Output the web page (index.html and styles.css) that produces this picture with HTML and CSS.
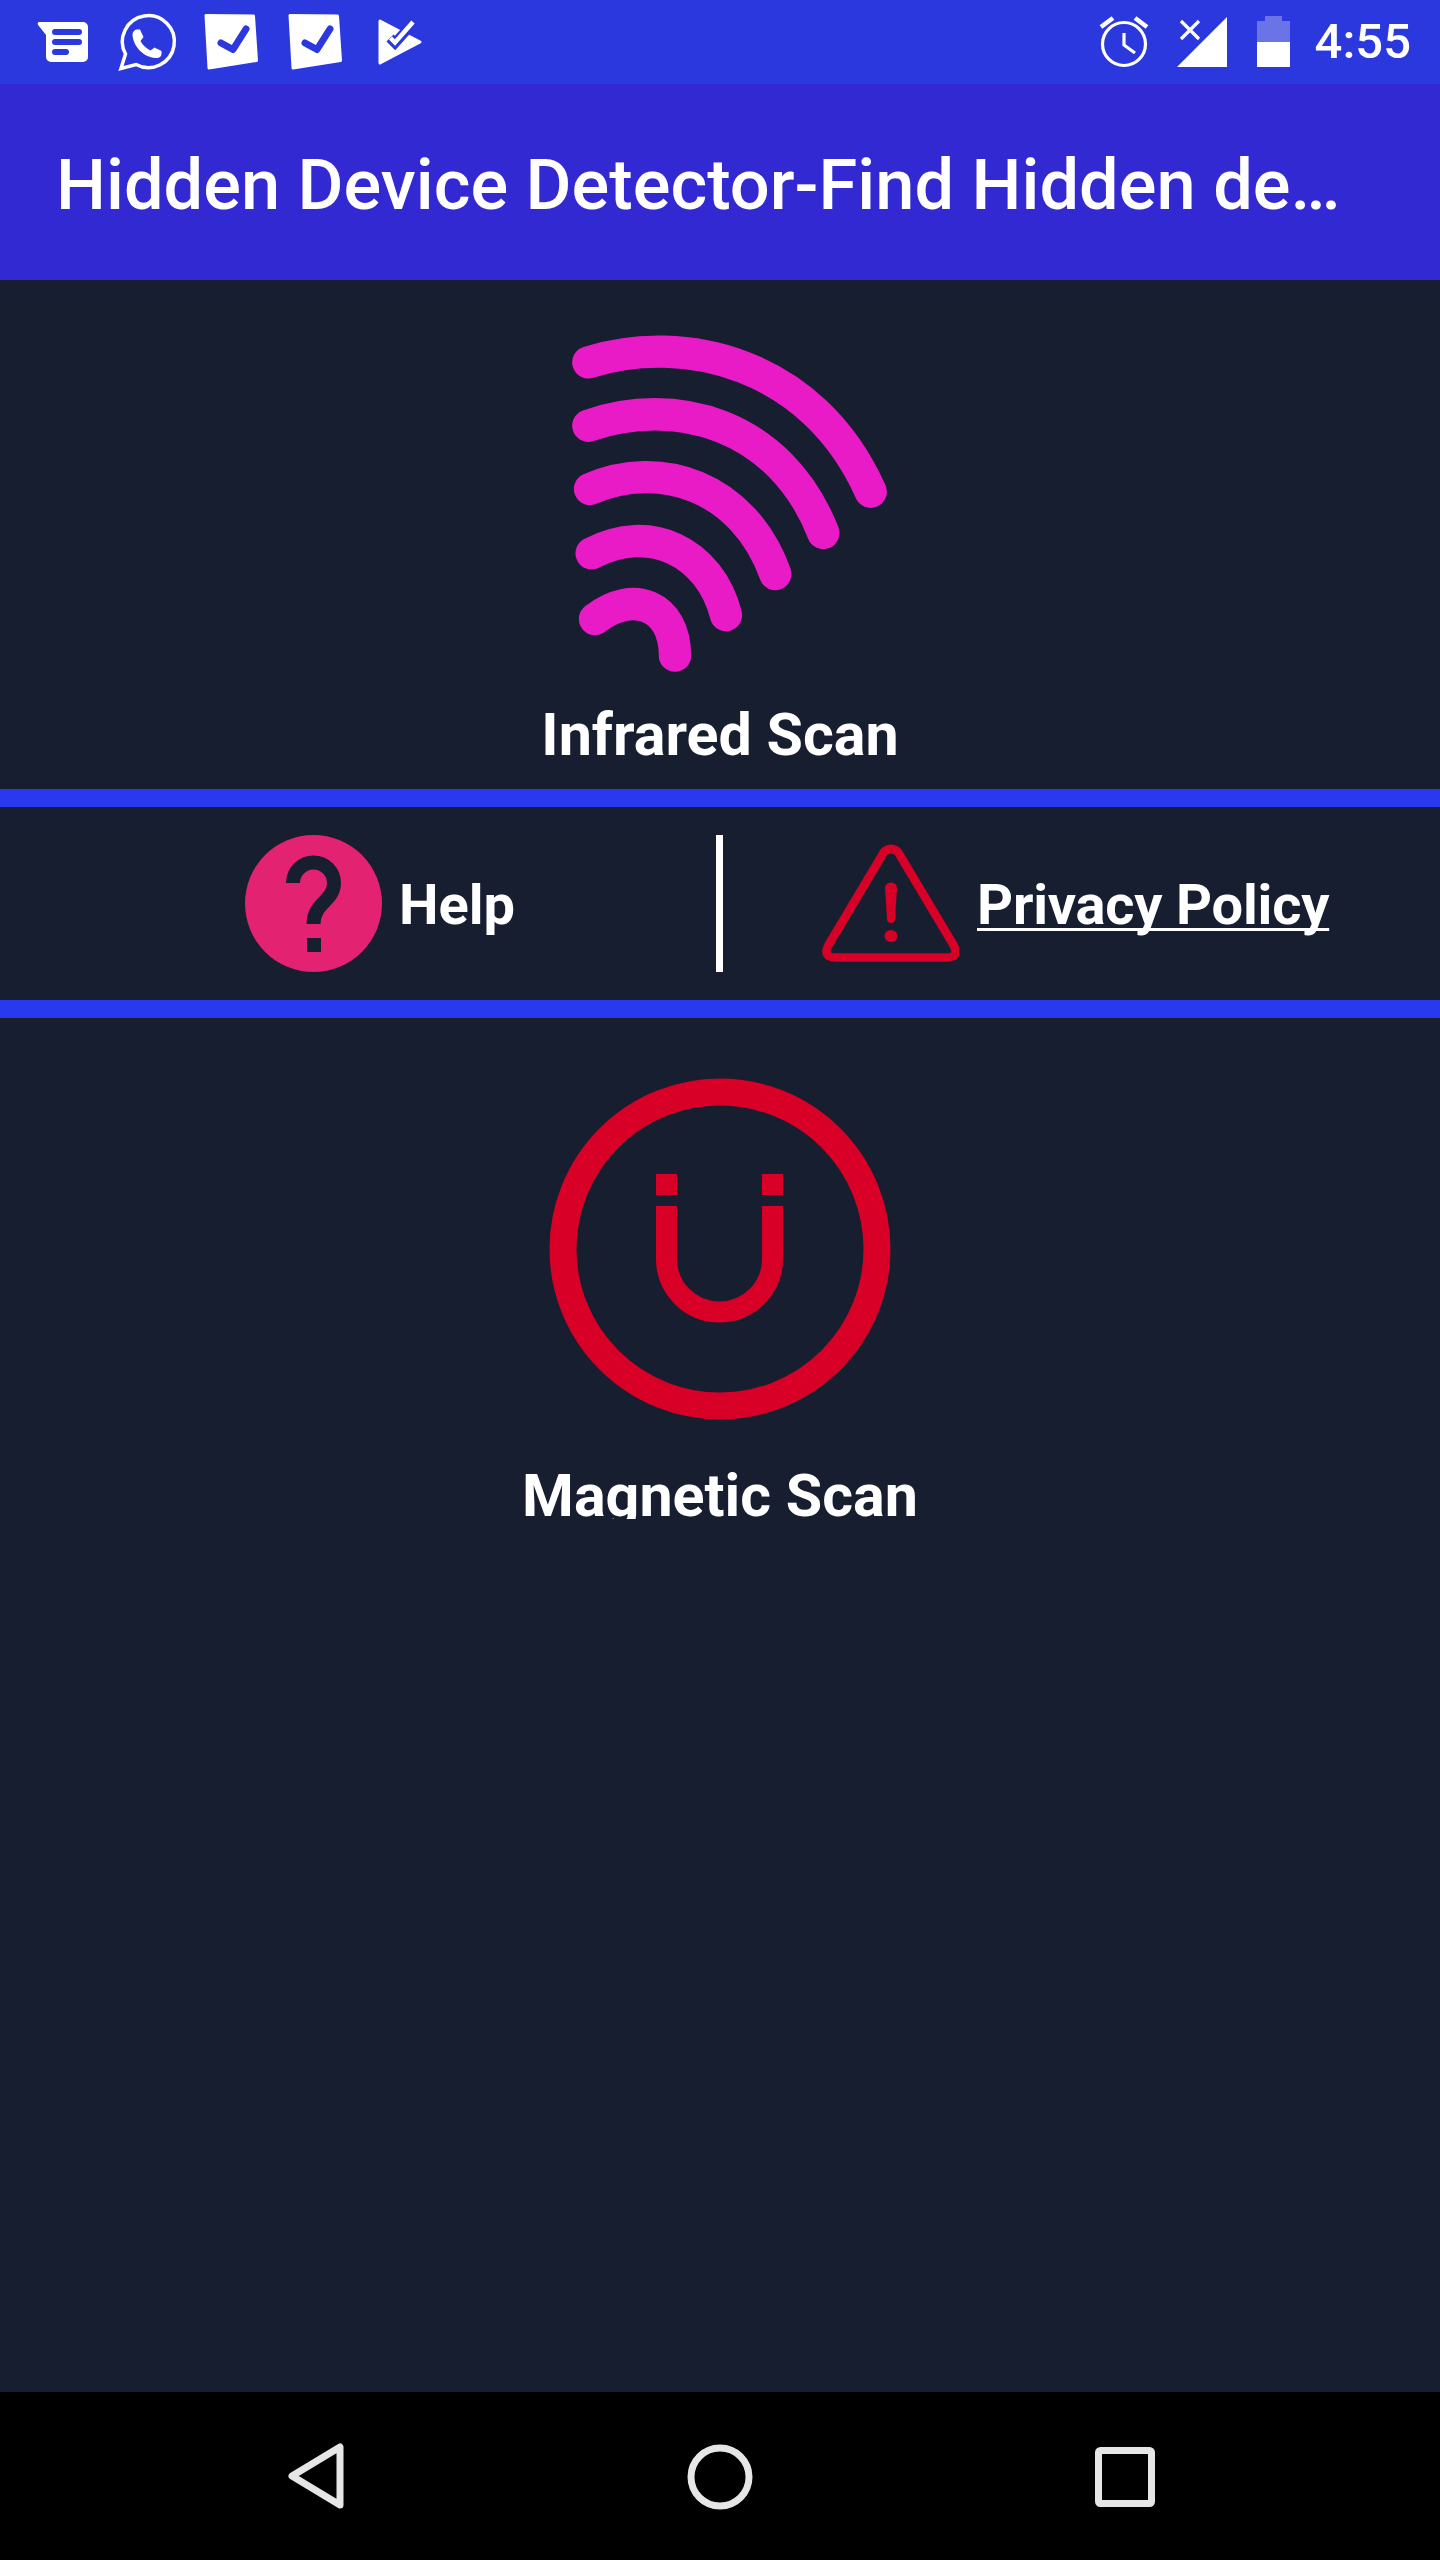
FILE: index.html
```html
<!DOCTYPE html>
<html lang="en">
<head>
<meta charset="utf-8">
<title>Hidden Device Detector</title>
<link rel="stylesheet" href="styles.css">
</head>
<body>
<div class="phone">
  <header class="status">
    <svg class="note" viewBox="21 0 84 84"><path class="w" d="M39 22H83a5 5 0 0 1 5 5V57a5 5 0 0 1-5 5H51a5 5 0 0 1-5-5V35L38.500 25.500A2 2 0 0 1 39 22Z"/><path class="b" d="M55 29H79a2 2 0 0 1 0 6H55a2 2 0 0 1 0-6ZM55 39H79a2 2 0 0 1 0 6H55a2 2 0 0 1 0-6ZM55 49H66a2 2 0 0 1 0 6H55a2 2 0 0 1 0-6Z"/></svg>
    <svg class="note" viewBox="105 0 84 84"><path class="ol" d="M121 68.500L125.500 54A26 26 0 1 1 136 64.500Z"/><path class="w" d="M137 29.500h3l3.500 7.500-3 4c2 4 6 7.500 10 9.500l4-3 7 3.500v3c0 3-3 4.500-6 4-12-1-22-11-23-23 0-3 2-5.500 4.500-5.500Z"/></svg>
    <svg class="note" viewBox="189 0 84 84"><path class="w rd" d="M206 15.500L253.500 16L256.500 60.500L209 68Z"/><path class="ck" d="M221 43L233 49.500L246 29"/></svg>
    <svg class="note" viewBox="273 0 84 84"><path class="w rd" d="M290 15.500L337.500 16L340.500 60.500L293 68Z"/><path class="ck" d="M305 43L317 49.500L330 29"/></svg>
    <svg class="note" viewBox="357 0 84 84"><path class="w rd" d="M380 21L420 42L380 63Z"/><path class="cb" d="M390 38L395 43L413 23"/><path class="cw" d="M390.500 38L395 42.500L413 22"/></svg>
    <div class="sys">
      <svg class="alarm" viewBox="0 0 80 84"><circle class="ln" cx="40" cy="44" r="21.500"/><path class="ln lt" d="M17 27L29 18M51 18L63 27"/><path class="ln" d="M40 33V45L51 53"/></svg>
      <svg class="signal" viewBox="0 0 76 84"><path class="w" d="M13 67H63V17Z"/><path class="ln" d="M17 21L35 39M35 21L17 39"/></svg>
      <svg class="battery" viewBox="0 0 67 84"><path class="w dim" d="M25 16H42V21H50V42H17V21H25Z"/><rect class="w" x="17" y="42" width="33" height="25"/></svg>
      <span class="clock">4:55</span>
    </div>
  </header>
  <div class="appbar"><h1 class="title">Hidden Device Detector-Find Hidden de…</h1></div>
  <main class="content">
    <section class="scan scan-ir">
      <svg class="wifi" viewBox="0 0 1140 1140"><path d="M145 160C430 70 820 160 992 548"/><path d="M145 350C400 260 720 340 850 672"/><path d="M150 540C360 450 610 530 706 795"/><path d="M155 733C330 640 510 730 558 918"/><path d="M165 930C280 840 405 890 405 1040"/></svg>
      <div class="label">Infrared Scan</div>
    </section>
    <nav class="links">
      <div class="link link-help">
        <svg class="link-icon" viewBox="0 0 137 137"><circle class="pink" cx="68.500" cy="68.500" r="68.500"/><path class="q" d="M48 48A20.500 20.500 0 0 1 89 48C89 66 68.500 68 68.500 89"/><rect class="qd" x="62" y="103" width="14" height="14"/></svg>
        <span class="link-text">Help</span>
      </div>
      <div class="divider"></div>
      <div class="link link-privacy">
        <svg class="link-icon" viewBox="0 0 137 137"><path class="tri" d="M62 17Q69 11 76 17L131.500 110Q138 122.500 124 122.500H14Q0 122.500 6.500 110Z"/><path class="red" d="M63 53a6 5.500 0 0 1 12 0L73 84a4 4 0 0 1-8 0Z"/><ellipse class="red" cx="69" cy="101" rx="6.500" ry="6"/></svg>
        <a class="link-text under" href="#">Privacy Policy</a>
      </div>
    </nav>
    <section class="scan scan-mag">
      <svg class="magnet" viewBox="0 0 342 342"><circle class="ring" cx="171" cy="171" r="157"/><rect class="red" x="107" y="96" width="21" height="21"/><rect class="red" x="213" y="96" width="21" height="21"/><path class="horse" d="M117.500 128V181A53 53 0 0 0 223.500 181V128"/></svg>
      <div class="label label-clip">Magnetic Scan</div>
    </section>
  </main>
  <footer class="navbar">
    <svg class="nav-back" viewBox="0 0 56 66"><path d="M52 4V62L4 33Z"/></svg>
    <svg class="nav-home" viewBox="0 0 66 66"><circle cx="33" cy="33" r="29"/></svg>
    <svg class="nav-recent" viewBox="0 0 60 60"><rect x="3.500" y="3.500" width="53" height="53" rx="2"/></svg>
  </footer>
</div>
</body>
</html>
```

FILE: styles.css
```css
* { box-sizing: border-box; }
html, body { margin: 0; padding: 0; background: #171e2f; }
.phone {
  width: 1440px;
  height: 2560px;
  display: flex;
  flex-direction: column;
  font-family: Roboto, "Liberation Sans", sans-serif;
  color: #fff;
  overflow: hidden;
}
.status {
  height: 84px;
  flex: none;
  display: flex;
  padding-left: 21px;
  background: #2b38dd;
}
.status svg { display: block; height: 84px; flex: none; }
.note { width: 84px; }
.w { fill: #fff; }
.b { fill: #2b38dd; }
.rd { stroke: #fff; stroke-width: 3; stroke-linejoin: round; }
.ol { fill: none; stroke: #fff; stroke-width: 3.500; stroke-linejoin: miter; }
.ck { fill: none; stroke: #2b38dd; stroke-width: 7; stroke-linecap: round; stroke-linejoin: round; }
.cb { fill: none; stroke: #2b38dd; stroke-width: 10; }
.cw { fill: none; stroke: #fff; stroke-width: 4.500; }
.sys { margin-left: auto; display: flex; align-items: center; padding-right: 29px; }
.alarm { width: 80px; }
.signal { width: 76px; }
.battery { width: 67px; }
.ln { fill: none; stroke: #fff; stroke-width: 3.200; }
.lt { stroke-width: 4.500; }
.dim { opacity: 0.3; }
.clock { margin-left: 8px; font-size: 49px; font-weight: 500; line-height: 84px; }
.appbar {
  height: 196px;
  flex: none;
  display: flex;
  align-items: center;
  padding: 6px 56px 0 56px;
  background: #3329d2;
}
.title {
  margin: 0;
  font-size: 70.400px;
  font-weight: 500;
  line-height: 84px;
  white-space: nowrap;
}
.content { flex: 1; display: flex; flex-direction: column; background: #171e2f; }
.scan { display: flex; flex-direction: column; align-items: center; }
.scan-ir {
  height: 527px;
  padding-top: 29px;
  border-bottom: 18px solid #293aee;
}
.wifi { display: block; width: 380px; height: 380px; flex: none; margin-left: 20px; }
.wifi path { fill: none; stroke: #e91bc7; stroke-width: 97; stroke-linecap: round; }
.label {
  font-size: 59.200px;
  font-weight: 700;
  line-height: 70px;
  white-space: nowrap;
}
.scan-ir .label { margin-top: 11px; }
.links {
  height: 211px;
  flex: none;
  display: flex;
  align-items: flex-start;
  padding-top: 28px;
  border-bottom: 18px solid #293aee;
}
.link { display: flex; align-items: center; height: 137px; }
.link-help { width: 716px; padding-left: 245px; gap: 17px; }
.link-privacy { padding-left: 99px; gap: 18px; }
.link-icon { display: block; width: 137px; height: 137px; flex: none; }
.link-text { font-size: 56px; font-weight: 700; color: #fff; white-space: nowrap; line-height: 66px; padding-top: 3px; }
.under {
  letter-spacing: -0.200px;
  text-decoration: underline;
  text-decoration-thickness: 3px;
  text-underline-offset: 4px;
  text-decoration-skip-ink: none;
}
.divider { width: 7px; height: 137px; flex: none; background: #fff; }
.pink { fill: #e32272; }
.q { fill: none; stroke: #171e2f; stroke-width: 14; }
.qd { fill: #171e2f; }
.tri { fill: none; stroke: #d80027; stroke-width: 8.500; stroke-linejoin: round; }
.red { fill: #d80027; }
.scan-mag { padding-top: 60px; }
.magnet { display: block; width: 342px; height: 342px; flex: none; }
.ring { fill: none; stroke: #d80027; stroke-width: 27; }
.horse { fill: none; stroke: #d80027; stroke-width: 21; }
.label-clip { height: 58px; margin-top: 41px; overflow: hidden; }
.navbar {
  height: 168px;
  flex: none;
  position: relative;
  background: #000;
}
.navbar svg { position: absolute; display: block; fill: none; stroke: #e6e6e6; stroke-width: 7; stroke-linejoin: round; }
.nav-back { left: 288px; top: 51px; width: 56px; height: 66px; }
.nav-home { left: 687px; top: 52px; width: 66px; height: 66px; }
.nav-recent { left: 1095px; top: 55px; width: 60px; height: 60px; }
```
